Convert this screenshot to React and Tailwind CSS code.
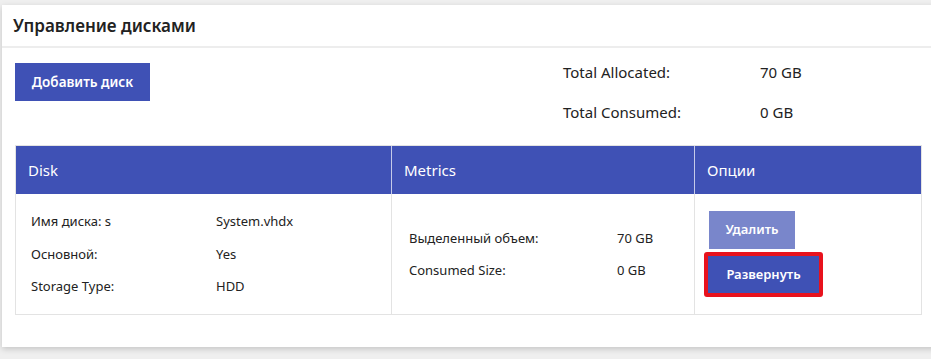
import React from 'react';

const font = { fontFamily: '"Noto Sans", "Open Sans", sans-serif' };

function DiskTable() {
  return (
    <div className="border border-[#e3e3e3] text-[13px] text-[#222]">
      <div className="grid grid-cols-[376px_303px_1fr] bg-[#3f51b5] text-white text-[15px] h-[48px]">
        <div className="flex items-center pl-[12px] border-r border-[#c5cae9]">Disk</div>
        <div className="flex items-center pl-[12px] border-r border-[#c5cae9]">Metrics</div>
        <div className="flex items-center pl-[12px]">Опции</div>
      </div>
      <div className="grid grid-cols-[376px_303px_1fr] h-[120px]">
        <div className="border-r border-[#e3e3e3] pl-[15px] pt-[18px] flex flex-col gap-[13px]">
          <div className="flex"><span className="w-[185px]">Имя диска: s</span><span>System.vhdx</span></div>
          <div className="flex"><span className="w-[185px]">Основной:</span><span>Yes</span></div>
          <div className="flex"><span className="w-[185px]">Storage Type:</span><span>HDD</span></div>
        </div>
        <div className="border-r border-[#e3e3e3] pl-[17px] pt-[35px] flex flex-col gap-[12px]">
          <div className="flex"><span className="w-[208px]">Выделенный объем:</span><span>70 GB</span></div>
          <div className="flex"><span className="w-[208px]">Consumed Size:</span><span>0 GB</span></div>
        </div>
        <div className="pl-[9px] pt-[17px] flex flex-col items-start gap-[3px]">
          <button className="ml-[5px] w-[86px] h-[38px] bg-[#7986cb] text-white font-semibold text-[13px]">Удалить</button>
          <div className="border-[4px] border-[#e8121d] rounded-[3px]">
            <button className="w-[111px] h-[37px] bg-[#3f51b5] text-white font-semibold text-[13px]">Развернуть</button>
          </div>
        </div>
      </div>
    </div>
  );
}

export default function App() {
  return (
    <div className="w-[931px] h-[359px] bg-[#efefef] pt-[5px] pl-[2px] overflow-hidden" style={font}>
      <div className="w-[935px] h-[342px] bg-white shadow-[0_2px_6px_rgba(0,0,0,0.18)]">
        <div className="h-[43px] flex items-center pl-[11px] border-b-2 border-[#ededed]">
          <h1 className="text-[17px] font-semibold text-[#222]">Управление дисками</h1>
        </div>
        <div className="px-[13px]">
          <div className="flex items-start pt-[15px] h-[97px]">
            <button className="w-[135px] h-[38px] bg-[#3f51b5] text-white font-semibold text-[13.5px]">Добавить диск</button>
            <div className="ml-[413px] -mt-[2px] text-[15px] text-[#222] flex flex-col gap-[17px]">
              <div className="flex"><span className="w-[197px]">Total Allocated:</span><span>70 GB</span></div>
              <div className="flex"><span className="w-[197px]">Total Consumed:</span><span>0 GB</span></div>
            </div>
          </div>
          <div className="w-[907px]">
            <DiskTable />
          </div>
        </div>
      </div>
    </div>
  );
}
